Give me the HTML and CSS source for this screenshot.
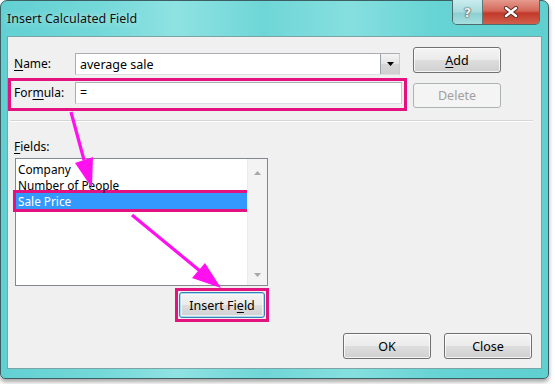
FILE: index.html
```html
<!DOCTYPE html>
<html>
<head>
<meta charset="utf-8">
<link rel="stylesheet" href="styles.css">
</head>
<body>
<div class="window">
  <div class="titlebar">
    <span class="title">Insert Calculated Field</span>
    <div class="caption-btns">
      <div class="cbtn help"><span>?</span></div>
      <div class="cbtn close">
        <svg width="16" height="12" viewBox="0 0 16 12">
          <path d="M3 2 L13 10 M13 2 L3 10" stroke="#5a2a24" stroke-width="4.2" stroke-linecap="round"/>
          <path d="M3 2 L13 10 M13 2 L3 10" stroke="#ffffff" stroke-width="2.4" stroke-linecap="round"/>
        </svg>
      </div>
    </div>
  </div>
  <div class="client">
    <div class="top">
      <div class="left-col">
        <div class="name-row">
          <span class="lbl"><u>N</u>ame:</span>
          <div class="combo">
            <span class="combo-text">average sale</span>
            <div class="drop">
              <svg width="7" height="4" viewBox="0 0 7 4"><path d="M0 0 H7 L3.5 4 Z" fill="#000"/></svg>
            </div>
          </div>
        </div>
        <div class="formula-row mark">
          <span class="lbl">For<u>m</u>ula:</span>
          <div class="input">=</div>
        </div>
      </div>
      <div class="btn-col">
        <div class="btn add"><span><u>A</u>dd</span></div>
        <div class="btn disabled del"><span>Delete</span></div>
      </div>
    </div>
    <div class="sep"></div>
    <div class="fields-label"><u>F</u>ields:</div>
    <div class="listbox">
      <div class="items">
        <div class="item">Company</div>
        <div class="item">Number of People</div>
        <div class="item selected">Sale Price</div>
      </div>
      <div class="scrollbar">
        <svg width="7" height="4" viewBox="0 0 7 4"><path d="M0 4 H7 L3.5 0 Z" fill="#a8a8a8"/></svg>
        <svg width="7" height="4" viewBox="0 0 7 4"><path d="M0 0 H7 L3.5 4 Z" fill="#a8a8a8"/></svg>
      </div>
    </div>
    <div class="insert-wrap mark">
      <div class="btn focus"><span>Insert Fi<u>e</u>ld</span></div>
    </div>
    <div class="footer">
      <div class="btn"><span>OK</span></div>
      <div class="btn"><span>Close</span></div>
    </div>
  </div>
</div>
<svg class="arrows" width="555" height="384" viewBox="0 0 555 384">
  <path d="M71 112 L84 160" stroke="#ff10ee" stroke-width="3.2" fill="none"/>
  <polygon points="92,188 75,163 93,157" fill="#ff10ee"/>
  <path d="M132 215 L200 271" stroke="#ff10ee" stroke-width="3.2" fill="none"/>
  <polygon points="221,288 192,278 205,263" fill="#ff10ee"/>
</svg>
</body>
</html>
```
FILE: styles.css
```css
* { box-sizing: border-box; margin: 0; padding: 0; }
body {
  width: 555px;
  height: 384px;
  background: #ffffff;
  font-family: "Noto Sans", "Open Sans", sans-serif;
  font-size: 12px;
  color: #000;
  overflow: hidden;
  position: relative;
}
u { text-decoration: underline; text-underline-offset: 2px; }

.window {
  width: 549px;
  height: 379px;
  border: 1px solid #3b5f62;
  border-radius: 7px 7px 5px 5px;
  padding: 0 6px;
  background: linear-gradient(90deg, #62d0d2 0%, #74d8d9 18%, #8fe2e2 32%, #6fd6d7 48%, #86dfdf 64%, #66d3d4 80%, #5fcfd0 100%);
  box-shadow: 0 3px 4px rgba(0, 0, 0, 0.35);
}

.titlebar {
  height: 35px;
  display: flex;
  align-items: flex-start;
}
.title {
  line-height: 35px;
  font-size: 12.5px;
  color: #111;
  text-shadow: 0 0 6px rgba(255, 255, 255, 0.7);
}
.caption-btns {
  margin-left: auto;
  margin-right: 2px;
  margin-top: -1px;
  display: flex;
  height: 25px;
  border: 1px solid #4d6b6d;
  border-top: none;
  border-radius: 0 0 5px 5px;
  overflow: hidden;
}
.cbtn {
  height: 100%;
  display: flex;
  align-items: center;
  justify-content: center;
}
.help {
  width: 30px;
  background: linear-gradient(180deg, #c9eced 0%, #a9dcdd 50%, #8ccfd0 55%, #a7dfe0 100%);
  border-right: 1px solid #5c7a7c;
}
.help span {
  font-family: "DejaVu Sans", sans-serif;
  font-weight: bold;
  font-size: 13px;
  color: #f2f2f2;
  text-shadow: 0 0 1px #333, 0 0 2px #444;
}
.close {
  width: 56px;
  background: linear-gradient(180deg, #e59a8d 0%, #d4685a 45%, #c2392a 55%, #d0604a 100%);
}

.client {
  height: 333px;
  background: #f0f0f0;
  border: 1px solid #7ba4a7;
  padding: 10px 0 0 0;
}

.top {
  display: flex;
}
.left-col {
  width: 400px;
}
.name-row {
  height: 31px;
  padding: 6px 0 0 6px;
  display: flex;
  align-items: flex-start;
}
.lbl {
  width: 61px;
  line-height: 22px;
}
.combo {
  width: 325px;
  height: 22px;
  border: 1px solid #abadb3;
  border-right-color: #c8ccd2;
  border-bottom-color: #dbdfe6;
  background: #fff;
  display: flex;
  align-items: center;
}
.combo-text {
  flex: 1;
  padding-left: 4px;
  font-size: 12.5px;
}
.drop {
  width: 19px;
  height: 20px;
  border-left: 1px solid #9aa0a6;
  background: linear-gradient(180deg, #f3f3f3 0%, #e4e4e4 50%, #d6d6d6 51%, #cfcfcf 100%);
  display: flex;
  align-items: center;
  justify-content: center;
}

.mark {
  border: 3px solid #e3127e;
}
.formula-row {
  width: 399px;
  height: 33px;
  padding: 1px 2px 0 3px;
  display: flex;
  align-items: flex-start;
}
.input {
  width: 327px;
  height: 22px;
  border: 1px solid #abadb3;
  border-right-color: #c8ccd2;
  border-bottom-color: #dbdfe6;
  background: #fff;
  padding-left: 4px;
  line-height: 19px;
  font-size: 12.5px;
}

.btn-col {
  margin-left: 5px;
  width: 88px;
  display: flex;
  flex-direction: column;
}
.btn {
  width: 88px;
  height: 26px;
  border: 1px solid #707070;
  border-radius: 3px;
  background: linear-gradient(180deg, #f4f4f4 0%, #ebebeb 48%, #dddddd 52%, #d0d0d0 100%);
  box-shadow: inset 0 0 0 1px rgba(255, 255, 255, 0.75);
  display: flex;
  align-items: center;
  justify-content: center;
  font-size: 12.5px;
}
.btn.del {
  margin-top: 10px;
  height: 25px;
}
.btn.disabled {
  border-color: #adb2b5;
  background: #f4f4f4;
  color: #a0a0a0;
  box-shadow: none;
}

.sep {
  margin: 9px 8px 0 2px;
  height: 2px;
  border-top: 1px solid #d5d5d5;
  border-bottom: 1px solid #ffffff;
}
.fields-label {
  margin-top: 17px;
  padding-left: 6px;
  line-height: 16px;
}
.listbox {
  margin: 3px 0 0 7px;
  width: 253px;
  height: 128px;
  border: 1px solid #828790;
  background: #fff;
  display: flex;
}
.items {
  flex: 1;
  padding-top: 2px;
}
.item {
  height: 16px;
  line-height: 16px;
  padding-left: 2px;
  font-size: 11.8px;
  white-space: nowrap;
  overflow: hidden;
}
.item.selected {
  background: #3399ff;
  color: #fff;
  box-shadow: 0 0 0 3px #e3127e;
}
.scrollbar {
  width: 20px;
  background: #f3f3f3;
  border-left: 1px solid #ececec;
  display: flex;
  flex-direction: column;
  justify-content: space-between;
  align-items: center;
  padding: 12px 0 8px 0;
}

.insert-wrap {
  margin: 2px 0 0 167px;
  width: 94px;
  height: 34px;
  padding: 1px;
}
.btn.focus {
  width: 86px;
  height: 26px;
  border-color: #3c7fb1;
  box-shadow: inset 0 0 0 1px #a8dcf5, inset 0 0 0 2px rgba(255, 255, 255, 0.6);
}

.footer {
  margin-top: 11px;
  padding-right: 9px;
  display: flex;
  justify-content: flex-end;
  gap: 13px;
}

.arrows {
  position: absolute;
  left: 0;
  top: 0;
  pointer-events: none;
}
```
